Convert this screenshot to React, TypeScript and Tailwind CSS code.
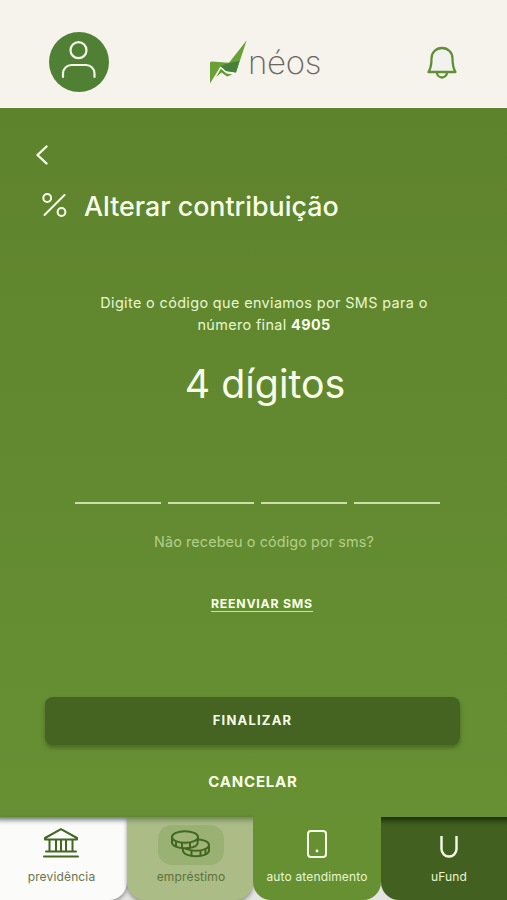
import React from 'react';

const ProfileIcon: React.FC = () => (
   <svg className="w-[60px] h-[60px]" viewBox="0 0 60 60" fill="none">
      <circle cx="30" cy="30" r="30" fill="#508033" />
      <g stroke="#f5f5e8" strokeWidth="2.200" strokeLinecap="round">
         <circle cx="29.500" cy="18.200" r="8" />
         <path d="M14 45v-3.500a8.500 8.500 0 0 1 8.500-8.500h14.500a8.500 8.500 0 0 1 8.500 8.500V45" />
      </g>
   </svg>
);

const NeosMark: React.FC = () => (
   <svg className="w-[38px] h-[44px]" viewBox="0 0 38 44">
      <path d="M0 23q0-1.500 1.500-1.500L19 22.800 36.700.300 26 32.500 16 31 10.500 26.500 0 43.500Z" fill="#69a136" />
      <path d="M9 26.500 20 22.800 29.500 21 26 32.500 16 31 10.500 26Z" fill="#458139" />
      <path d="M6 37 11 28.500 16.500 33.500 22.500 34.500 17 36.500 11.500 32.500Z" fill="#5f9b35" />
      <path d="M4.500 38.500 10.500 27.500 16.500 32.500 24 34.200" fill="none" stroke="#f5f3ec" strokeWidth="1.100" />
   </svg>
);

const BellIcon: React.FC = () => (
   <svg className="w-8 h-8 overflow-visible" viewBox="0 0 32 32" fill="none" stroke="#609035" strokeWidth="2.300" strokeLinejoin="round">
      <path d="M16 2c-6 0-10.500 4.500-10.500 10.500 0 6-.500 9.500-3 13.500h27c-2.500-4-3-7.500-3-13.500C26.500 6.500 22 2 16 2Z" fill="#f1f2ee" />
      <path d="M11 26.500a5 5 0 0 0 10 0" />
   </svg>
);

const PercentIcon: React.FC = () => (
   <svg className="w-[25px] h-6 -mt-[2px]" viewBox="0 0 25 24" fill="none" stroke="#f7ffe9" strokeWidth="2" strokeLinecap="round">
      <circle cx="5.200" cy="5" r="3.900" />
      <circle cx="19.500" cy="19" r="3.900" />
      <path d="M22.500 2 2.500 22" />
   </svg>
);

const BankIcon: React.FC = () => (
   <svg className="w-9 h-[30px] -mt-1 mr-[2px]" viewBox="0 0 36 30" fill="none" stroke="#436620" strokeWidth="2" strokeLinecap="round" strokeLinejoin="round">
      <path d="M2 10 18 1.200l16 8.800v1.500H2ZM6.500 11.500v12M13 11.500v12M18 11.500v12M23 11.500v12M29.500 11.500v12M3 23.500h30M1 28.500h34" />
   </svg>
);

const CoinsIcon: React.FC = () => (
   <svg className="w-[39px] h-7 -mt-[2px] mr-px" viewBox="0 0 39 28" fill="none" stroke="#436620" strokeWidth="2">
      <path d="M12 15v5.500c0 3.300 5.800 5.800 13 5.800s13-2.500 13-5.800V15" fill="#9fb577" />
      <ellipse cx="25" cy="15" rx="13" ry="5.800" fill="#9fb577" />
      <path d="M20.500 20v6M29.500 20v6M34.500 18.500V24" />
      <path d="M1 7v5.500c0 3.300 5.800 5.800 13 5.800 6 0 11-1.800 12.500-4.300L27 7" fill="#9fb577" />
      <ellipse cx="14" cy="7" rx="13" ry="5.800" fill="#9fb577" />
      <path d="M5 11v5M11 12.500v6M19 12.500v5.500" />
   </svg>
);

const PhoneIcon: React.FC = () => (
   <svg className="w-5 h-7 -mt-[2px]" viewBox="0 0 20 28" fill="none" stroke="#f7ffe9" strokeWidth="2">
      <rect x="1" y="1" width="18" height="26" rx="3" />
      <circle cx="10" cy="21" r="1.400" fill="#f7ffe9" stroke="none" />
   </svg>
);

const UIcon: React.FC = () => (
   <svg className="w-[18px] h-[22px] mt-1" viewBox="0 0 18 22" fill="none" stroke="#f7ffe9" strokeWidth="2.400">
      <path d="M1.500 0v13a7.500 7.500 0 0 0 15 0V0" />
   </svg>
);

const Header: React.FC = () => (
   <header className="h-[108px] shrink-0 bg-[#f5f3ec] border-b border-[#fbfff2] flex items-start pt-8 pl-[49px]">
      <ProfileIcon />
      <div className="w-[112px] ml-[101px] flex items-start pt-2">
         <NeosMark />
         <span className="-mt-[1px] font-extralight text-[33px] leading-[46px] tracking-[-0.3px] text-[#6b655f]">néos</span>
      </div>
      <div className="pt-[14px] ml-[104px]">
         <BellIcon />
      </div>
   </header>
);

const CodeForm: React.FC = () => (
   <main className="h-[709px] shrink-0 bg-linear-to-b from-[#5e832d] to-[#679033] text-[#f7ffe9] flex flex-col">
      <button className="mt-[37px] ml-9 w-3 h-5" aria-label="Voltar">
         <svg className="w-3 h-5" viewBox="0 0 12 20" fill="none" stroke="currentColor" strokeWidth="2.400" strokeLinecap="round" strokeLinejoin="round">
            <path d="M10.500 1.500 1.500 10l9 8.500" />
         </svg>
      </button>

      <div className="mt-[23px] pl-[42px] h-9 flex items-center gap-[17px]">
         <PercentIcon />
         <h1 className="text-[26.8px] leading-9 font-medium whitespace-nowrap">Alterar contribuição</h1>
      </div>

      <p className="mt-[68px] pl-[21px] text-center text-[14.4px] leading-[22px] tracking-[0.38px] text-[#e9f7cf]">
         Digite o código que enviamos por SMS para o
         <br />
         número final <b className="text-[#f7ffe9]">4905</b>
      </p>

      <p className="mt-6 pl-[23px] text-center text-[39.3px] leading-[48px] whitespace-nowrap">4 dígitos</p>

      <div className="mt-[94px] mx-auto pl-2 flex gap-[7px]">
         {[0, 1, 2, 3].map((i) => (
            <div key={i} className="w-[86px] h-[2px] bg-[#c9e0a9]"></div>
         ))}
      </div>

      <p className="mt-[27px] pl-[21px] text-center text-[14.4px] leading-[22px] tracking-[0.1px] text-[#b3cf8c]">Não recebeu o código por sms?</p>

      <button className="mt-11 ml-[211px] self-start border-b border-[#c9e0a9] text-[12.3px] leading-[14px] font-bold tracking-[0.75px] whitespace-nowrap">
         REENVIAR SMS
      </button>

      <button className="mt-[85px] ml-[45px] w-[415px] h-[48px] rounded-lg bg-[#456321] shadow-[0_3px_4px_rgba(40,60,20,0.45)] text-[13px] font-bold tracking-[1.2px]">
         FINALIZAR
      </button>
      <button className="mt-[26px] pr-px text-[15px] leading-[22px] font-bold tracking-[0.8px]">CANCELAR</button>
   </main>
);

const tabs = [
   { label: 'previdência', icon: <BankIcon />, cls: 'w-[127px] pr-1 bg-[#fbfbfa] text-[#65754f] rounded-br-[18px] shadow-[0_2px_4px_rgba(0,0,0,0.4),inset_0_9px_5px_-6px_rgba(60,75,70,0.75)]', box: '' },
   { label: 'empréstimo', icon: <CoinsIcon />, cls: 'w-[126px] pl-[2px] bg-[#abbc87] text-[#5b7338] rounded-b-[18px] shadow-[0_2px_4px_rgba(0,0,0,0.4),inset_0_9px_5px_-6px_rgba(75,95,60,0.6)]', box: 'bg-[#99b172]' },
   { label: 'auto atendimento', icon: <PhoneIcon />, cls: 'w-[128px] bg-[#679033] text-[#e9f7cf] rounded-b-[18px]', box: '' },
   { label: 'uFund', icon: <UIcon />, cls: 'w-[126px] pl-[10px] bg-[#426120] text-[#e9f7cf] rounded-bl-[18px] shadow-[inset_0_9px_5px_-5px_rgba(20,40,0,0.8)]', box: '' },
];

const TabBar: React.FC = () => (
   <nav className="h-[83px] shrink-0 bg-[#e4e5e2] flex">
      {tabs.map((tab) => (
         <div key={tab.label} className={`h-full shrink-0 flex flex-col items-center ${tab.cls}`}>
            <div className={`mt-2 w-[66px] h-10 rounded-[14px] flex items-center justify-center ${tab.box}`}>{tab.icon}</div>
            <span className="mt-[3px] text-[12px] leading-[18px] tracking-[0.15px] whitespace-nowrap">{tab.label}</span>
         </div>
      ))}
   </nav>
);

const App: React.FC = () => {
   return (
      <div className="w-[507px] h-[900px] overflow-hidden flex flex-col font-['Inter',sans-serif]">
         <Header />
         <CodeForm />
         <TabBar />
      </div>
   );
};

export default App;
